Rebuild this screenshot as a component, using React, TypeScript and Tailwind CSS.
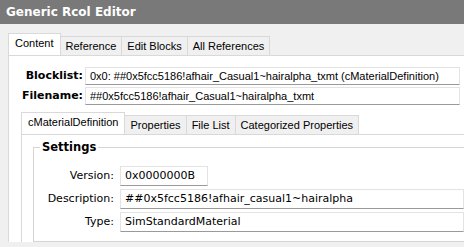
import React from "react";

const outerTabs = ["Content", "Reference", "Edit Blocks", "All References"];
const innerTabs = ["cMaterialDefinition", "Properties", "File List", "Categorized Properties"];

function Tab({ label, active }: { label: string; active: boolean }) {
  return active ? (
    <div className="relative z-10 -mb-px flex h-[22px] items-center border border-b-0 border-[#d9d9d9] bg-white px-[6px] pb-[2px]">
      {label}
    </div>
  ) : (
    <div className="mt-[3px] flex h-[19px] items-center border border-l-0 border-b-0 border-[#d9d9d9] bg-[#f0f0f0] px-[5px]">
      {label}
    </div>
  );
}

function Field({ value, className }: { value: string; className?: string }) {
  return (
    <div
      className={`flex items-center border border-[#e3e3e3] border-b-[#9a9a9a] bg-white px-[4px] ${className ?? ""}`}
    >
      {value}
    </div>
  );
}

export default function App() {
  return (
    <div className="h-[247px] w-[464px] overflow-hidden bg-[#f0f0f0] font-['Liberation_Sans',sans-serif] text-[11px] text-black">
      <div className="flex h-[24px] items-center bg-[#797979] pl-[6px] font-['DejaVu_Sans',sans-serif] text-[12px] font-bold text-white">
        Generic Rcol Editor
      </div>

      <div className="pl-[8px] pt-[9px]">
        <div className="flex">
          {outerTabs.map((t, i) => (
            <Tab key={t} label={t} active={i === 0} />
          ))}
        </div>

        <div className="border-t border-l border-[#d9d9d9] bg-white">
          <div className="flex flex-col gap-[2px] pt-[11px] pr-[4px]">
            <div className="flex items-center">
              <span className="w-[76px] pr-[2px] text-right font-['DejaVu_Sans',sans-serif] text-[11px] font-bold">
                Blocklist:
              </span>
              <Field
                className="h-[18px] flex-1"
                value="0x0: ##0x5fcc5186!afhair_Casual1~hairalpha_txmt (cMaterialDefinition)"
              />
            </div>
            <div className="flex items-center">
              <span className="w-[76px] pr-[2px] text-right font-['DejaVu_Sans',sans-serif] text-[11px] font-bold">
                Filename:
              </span>
              <Field className="h-[18px] flex-1" value="##0x5fcc5186!afhair_Casual1~hairalpha_txmt" />
            </div>
          </div>

          <div className="pl-[12px] pt-[7px]">
            <div className="flex">
              {innerTabs.map((t, i) => (
                <Tab key={t} label={t} active={i === 0} />
              ))}
            </div>
            <div className="border-t border-l border-[#d9d9d9] bg-white pl-[11px] pt-[5px]">
              <fieldset className="border border-r-0 border-[#d5d5d5] pb-[9px] pl-[6px] font-['DejaVu_Sans',sans-serif] text-[11px]">
                <legend className="px-[2px] text-[11.5px] leading-[14px] font-bold">Settings</legend>
                <div className="flex flex-col gap-[3px] pt-[12px]">
                  <div className="flex items-center">
                    <span className="w-[80px] pr-[6px] text-right">Version:</span>
                    <Field className="h-[20px] w-[88px]" value="0x0000000B" />
                  </div>
                  <div className="flex items-center">
                    <span className="w-[80px] pr-[6px] text-right">Description:</span>
                    <Field className="h-[20px] flex-1" value="##0x5fcc5186!afhair_casual1~hairalpha" />
                  </div>
                  <div className="flex items-center">
                    <span className="w-[80px] pr-[6px] text-right">Type:</span>
                    <Field className="h-[20px] flex-1" value="SimStandardMaterial" />
                  </div>
                </div>
              </fieldset>
            </div>
          </div>
        </div>
      </div>
    </div>
  );
}
